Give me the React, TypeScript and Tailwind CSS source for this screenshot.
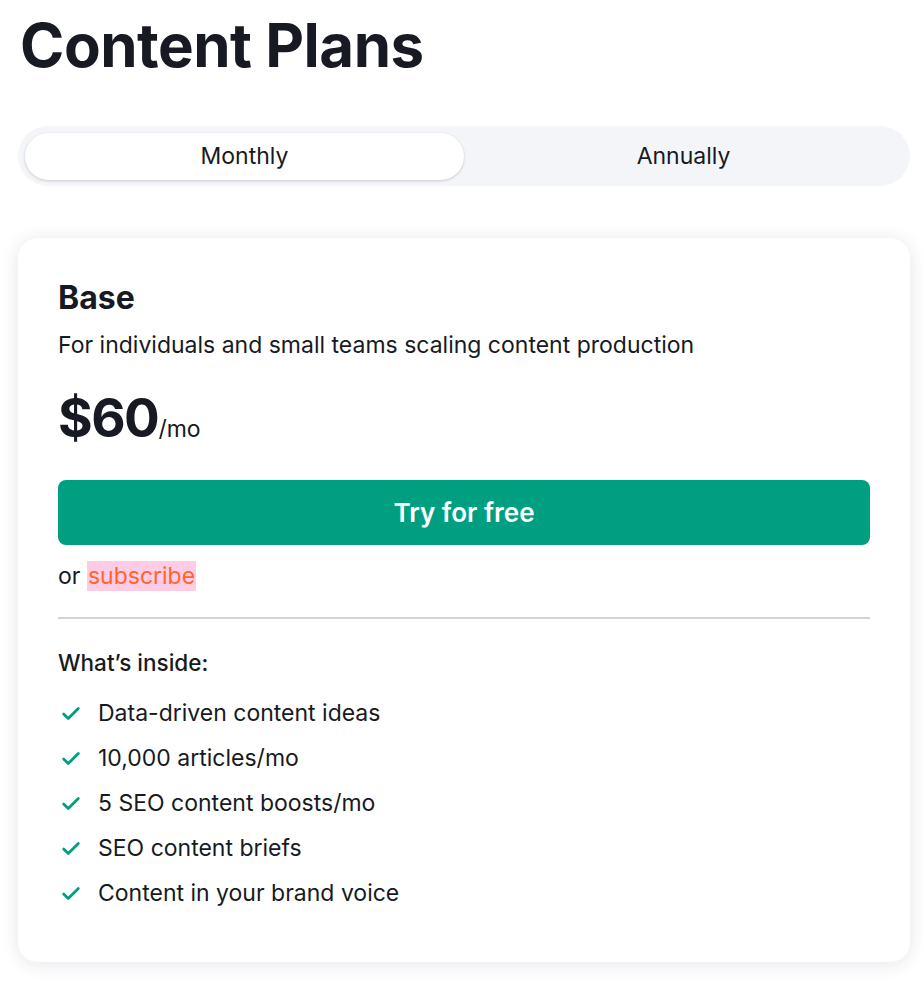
import { Check } from "lucide-react";

const features = [
  "Data-driven content ideas",
  "10,000 articles/mo",
  "5 SEO content boosts/mo",
  "SEO content briefs",
  "Content in your brand voice",
];

export default function App() {
  return (
    <main
      className="min-h-screen bg-white text-[#171a22] px-[18px] pt-[9px]"
      style={{ fontFamily: "Inter, 'Noto Sans', sans-serif" }}
    >
      <h1 className="pl-[2px] text-[60px] font-bold leading-[72px] tracking-[-0.5px]">
        Content Plans
      </h1>

      {/* billing toggle */}
      <div className="mt-[45px] flex h-[60px] w-[892px] items-center rounded-full bg-[#f4f5f9] p-[7px]">
        <button className="flex h-[47px] flex-1 items-center justify-center rounded-full bg-white text-[23px] shadow-[0_1px_3px_rgba(0,0,0,0.18)]">
          Monthly
        </button>
        <button className="flex h-[47px] flex-1 items-center justify-center rounded-full text-[23px]">
          Annually
        </button>
      </div>

      {/* plan card */}
      <div className="mt-[52px] w-[892px] rounded-[20px] bg-white px-[40px] pt-[38px] pb-[46px] shadow-[0_2px_18px_rgba(30,40,70,0.12)]">
        <h2 className="text-[32px] font-bold leading-[44px]">Base</h2>
        <p className="mt-[10px] text-[23px] leading-[30px]">
          For individuals and small teams scaling content production
        </p>

        <div className="mt-[22px] flex items-baseline">
          <span className="text-[53px] font-bold leading-[72px] tracking-[-1.5px]">$60</span>
          <span className="text-[23px]">/mo</span>
        </div>

        <button className="mt-[26px] flex h-[65px] w-full items-center justify-center rounded-[8px] bg-[#009f81] text-[26px] font-semibold text-white">
          Try for free
        </button>

        <p className="mt-[16px] text-[23px] leading-[30px]">
          or{" "}
          <a className="bg-[#ffcce6] px-[1px] py-[1px] text-[#ff642d]">subscribe</a>
        </p>

        <div className="mt-[26px] h-[2px] bg-[#d1d4db]" />

        <p className="mt-[30px] text-[22.5px] font-medium leading-[28px]">What’s inside:</p>

        <ul className="mt-[14px] flex flex-col">
          {features.map((f) => (
            <li key={f} className="flex h-[45px] items-center gap-[16px] text-[23px]">
              <Check className="ml-[2px] h-[22px] w-[22px] text-[#009f81]" strokeWidth={3} />
              {f}
            </li>
          ))}
        </ul>
      </div>
    </main>
  );
}
